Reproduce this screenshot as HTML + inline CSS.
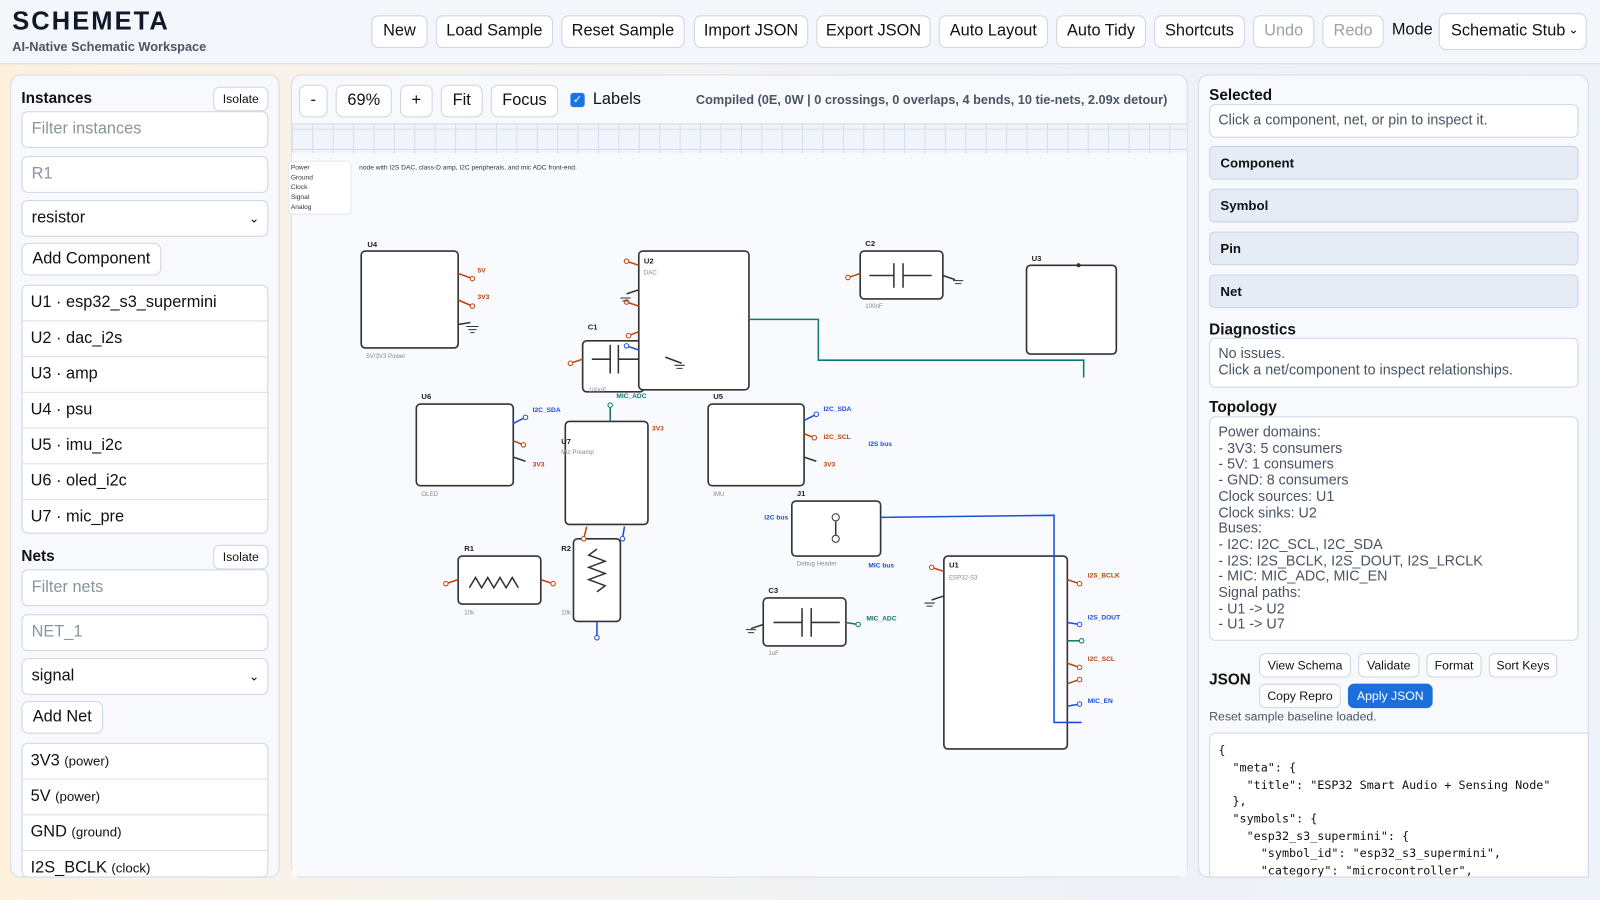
<!DOCTYPE html>
<html><head><meta charset="utf-8">
<style>
*{box-sizing:border-box;margin:0;padding:0}
html,body{width:1600px;height:900px;overflow:hidden}
body{font-family:"Liberation Sans",sans-serif;background:linear-gradient(90deg,#fdf1de 0%,#f5f3ef 30%,#eef2f8 70%,#eef3fa 100%);color:#111}
#w{position:absolute;left:0;top:0;width:1568px;height:882px;transform:scale(1.0204);transform-origin:0 0}
.a{position:absolute}
.hdr{left:0;top:0;width:1568px;height:63px;background:#f3f6fb;border-bottom:1px solid #cfd9e8}
.btn{position:absolute;background:#fff;border:1px solid #cdd6e2;border-radius:7px;font-size:16px;text-align:center;color:#111;line-height:30px;height:32px;white-space:nowrap}
.btn.dis{color:#9aa3ad}
.panel{position:absolute;background:#f7f9fc;border:1px solid #d4dce8;border-radius:10px}
.inp{position:absolute;background:#fff;border:1px solid #cdd6e2;border-radius:6px;font-size:16px;color:#8a94a0;padding-left:9px;line-height:34px;height:36px}
.list{position:absolute;background:#fff;border:1px solid #cdd6e2;border-radius:6px}
.li{height:35px;border-bottom:1px solid #d9e0ea;font-size:16px;line-height:34px;padding-left:8px}
.li small{font-size:13px}
.h{position:absolute;font-weight:bold;font-size:15px}
.sm{position:absolute;background:#fff;border:1px solid #cdd6e2;border-radius:6px;font-size:12px;text-align:center;line-height:22px;height:24px;white-space:nowrap}
.acc{position:absolute;left:1185px;width:362px;height:33px;background:#e6ecf5;border:1px solid #c9d3e2;border-radius:5px;font-weight:bold;font-size:13px;line-height:31px;padding-left:10px}
.box{position:absolute;background:#fff;border:1px solid #cdd6e2;border-radius:6px;font-size:14px;color:#4a5462;padding:7px 8px;line-height:15.7px}
</style></head><body><div id="w">
<div class="a hdr"></div>
<div class="a" style="left:12px;top:7px;font-size:25px;font-weight:bold;letter-spacing:2px;color:#111827">SCHEMETA</div>
<div class="a" style="left:12px;top:39px;font-size:12.5px;font-weight:bold;color:#4b5563">AI-Native Schematic Workspace</div>
<div class="btn" style="left:364px;top:15px;width:55px">New</div>
<div class="btn" style="left:427px;top:15px;width:115px">Load Sample</div>
<div class="btn" style="left:550px;top:15px;width:121px">Reset Sample</div>
<div class="btn" style="left:680px;top:15px;width:112px">Import JSON</div>
<div class="btn" style="left:800px;top:15px;width:112px">Export JSON</div>
<div class="btn" style="left:920px;top:15px;width:107px">Auto Layout</div>
<div class="btn" style="left:1035px;top:15px;width:88px">Auto Tidy</div>
<div class="btn" style="left:1131px;top:15px;width:89px">Shortcuts</div>
<div class="btn dis" style="left:1228px;top:15px;width:60px">Undo</div>
<div class="btn dis" style="left:1296px;top:15px;width:60px">Redo</div>
<div class="a" style="left:1364px;top:21px;font-size:16px">Mode</div>
<div class="btn" style="left:1410px;top:13px;width:145px;height:36px;line-height:34px;text-align:left;padding-left:11px">Schematic Stub <span style="position:absolute;right:7px;top:-2px;font-size:12px">&#8964;</span></div>

<!-- left panel -->
<div class="panel" style="left:10px;top:73px;width:264px;height:787px"></div>
<div class="h" style="left:21px;top:88px">Instances</div>
<div class="sm" style="left:209px;top:85px;width:54px">Isolate</div>
<div class="inp" style="left:21px;top:109px;width:242px">Filter instances</div>
<div class="inp" style="left:21px;top:153px;width:242px">R1</div>
<div class="inp" style="left:21px;top:196px;width:242px;color:#111">resistor<span style="position:absolute;right:8px;font-size:12px">&#8964;</span></div>
<div class="btn" style="left:21px;top:238px;width:137px">Add Component</div>
<div class="list" style="left:21px;top:279px;width:242px;height:244px">
<div class="li">U1 · esp32_s3_supermini</div><div class="li">U2 · dac_i2s</div><div class="li">U3 · amp</div><div class="li">U4 · psu</div><div class="li">U5 · imu_i2c</div><div class="li">U6 · oled_i2c</div><div class="li" style="border:0">U7 · mic_pre</div></div>
<div class="h" style="left:21px;top:537px">Nets</div>
<div class="sm" style="left:209px;top:534px;width:54px">Isolate</div>
<div class="inp" style="left:21px;top:558px;width:242px">Filter nets</div>
<div class="inp" style="left:21px;top:602px;width:242px">NET_1</div>
<div class="inp" style="left:21px;top:645px;width:242px;color:#111">signal<span style="position:absolute;right:8px;font-size:12px">&#8964;</span></div>
<div class="btn" style="left:21px;top:687px;width:80px">Add Net</div>
<div class="list" style="left:21px;top:728px;width:242px;height:132px;overflow:hidden">
<div class="li">3V3 <small>(power)</small></div><div class="li">5V <small>(power)</small></div><div class="li">GND <small>(ground)</small></div><div class="li">I2S_BCLK <small>(clock)</small></div></div>

<!-- center panel -->
<div class="panel" style="left:285px;top:73px;width:879px;height:787px"></div>
<div class="btn" style="left:293px;top:83px;width:28px">-</div>
<div class="btn" style="left:329px;top:83px;width:55px">69%</div>
<div class="btn" style="left:392px;top:83px;width:32px">+</div>
<div class="btn" style="left:432px;top:83px;width:41px">Fit</div>
<div class="btn" style="left:481px;top:83px;width:66px">Focus</div>
<div class="a" style="left:559px;top:91px;width:14px;height:14px;background:#1a73e8;border-radius:3px;color:#fff;font-size:11px;text-align:center;line-height:14px">✓</div>
<div class="a" style="left:581px;top:89px;font-size:16px">Labels</div>
<div class="a" style="left:682px;top:91px;font-size:12.5px;font-weight:bold;color:#4b5563">Compiled (0E, 0W | 0 crossings, 0 overlaps, 4 bends, 10 tie-nets, 2.09x detour)</div>
<div class="a" style="left:286px;top:121px;width:877px;height:738px;background:#f8fafd;border-top:1px solid #cfd9e8"></div>
<div class="a" style="left:286px;top:122px;width:877px;height:28px;background-color:#f1f5fb;background-image:linear-gradient(90deg,#d4deea 1px,transparent 1px),linear-gradient(0deg,#d4deea 1px,transparent 1px);background-size:20px 20px;background-position:0 0,0 5px"></div>

<svg class="a" style="left:0;top:0" width="1568" height="882" viewBox="0 0 1568 882" font-family="Liberation Sans,sans-serif">
<defs><marker id="c" markerWidth="6" markerHeight="6" refX="3" refY="3" markerUnits="userSpaceOnUse"><circle cx="3" cy="3" r="2.2" fill="#fff" stroke="context-stroke" stroke-width="1"/></marker></defs>
<rect x="283" y="158" width="61" height="52" rx="4" fill="#fff" stroke="#e3e8ef"/>
<g font-size="6.5" fill="#333"><text x="285" y="166">Power</text><text x="285" y="176">Ground</text><text x="285" y="185">Clock</text><text x="285" y="195">Signal</text><text x="285" y="205">Analog</text>
<text x="352" y="166">node with I2S DAC, class-D amp, I2C peripherals, and mic ADC front-end.</text></g>
<g fill="#fff" stroke="#333" stroke-width="1.6">
<rect x="354" y="246" width="95" height="95" rx="4"/>
<rect x="571" y="334" width="60" height="50" rx="4"/>
<rect x="626" y="246" width="108" height="136" rx="4"/>
<rect x="843" y="246" width="81" height="47" rx="4"/>
<rect x="1006" y="260" width="88" height="87" rx="4"/>
<rect x="408" y="396" width="95" height="80" rx="4"/>
<rect x="554" y="413" width="81" height="101" rx="4"/>
<rect x="694" y="396" width="94" height="80" rx="4"/>
<rect x="776" y="491" width="87" height="54" rx="4"/>
<rect x="449" y="545" width="81" height="47" rx="4"/>
<rect x="562" y="528" width="46" height="81" rx="4"/>
<rect x="748" y="586" width="81" height="47" rx="4"/>
<rect x="925" y="545" width="121" height="189" rx="4"/>
</g>
<g font-size="7.5" font-weight="bold" fill="#222"><text x="360" y="242">U4</text><text x="576" y="323">C1</text><text x="631" y="258">U2</text><text x="848" y="241">C2</text><text x="1011" y="256">U3</text><text x="413" y="391">U6</text><text x="550" y="435">U7</text><text x="699" y="391">U5</text><text x="781" y="486">J1</text><text x="455" y="540">R1</text><text x="550" y="540">R2</text><text x="753" y="581">C3</text><text x="930" y="556">U1</text></g>
<g font-size="6" fill="#888"><text x="359" y="351">5V/3V3 Power</text><text x="631" y="269">DAC</text><text x="577" y="384">100nF</text><text x="848" y="302">100nF</text><text x="413" y="486">OLED</text><text x="550" y="445">Mic Preamp</text><text x="699" y="486">IMU</text><text x="781" y="554">Debug Header</text><text x="455" y="602">10k</text><text x="550" y="602">10k</text><text x="753" y="642">1uF</text><text x="930" y="568">ESP32-S3</text></g>
<g font-size="6.5" font-weight="bold"><g fill="#c2410c"><text x="468" y="267">5V</text><text x="468" y="293">3V3</text><text x="639" y="422">3V3</text><text x="522" y="457">3V3</text><text x="807" y="457">3V3</text><text x="807" y="430">I2C_SCL</text><text x="1066" y="566">I2S_BCLK</text><text x="1066" y="648">I2C_SCL</text></g>
<g fill="#1d4ed8"><text x="522" y="404">I2C_SDA</text><text x="807" y="403">I2C_SDA</text><text x="851" y="437">I2S bus</text><text x="749" y="509">I2C bus</text><text x="851" y="556">MIC bus</text><text x="1066" y="607">I2S_DOUT</text><text x="1066" y="689">MIC_EN</text></g>
<g fill="#0f766e"><text x="604" y="390">MIC_ADC</text><text x="849" y="608">MIC_ADC</text></g></g>
<g fill="none" stroke-width="1.5">
<path d="M734 313 H802 V353 H1062 V370" stroke="#0f766e"/>
<path d="M863 507 L1033 505 V708 H1060" stroke="#1d4ed8"/>
<g stroke="#c2410c" marker-end="url(#c)"><path d="M449 268 l14 5"/><path d="M449 294 l14 6"/><path d="M626 260 l-12 -4"/><path d="M626 300 l-12 -4"/><path d="M626 325 l-10 4"/><path d="M571 352 l-12 4"/><path d="M843 268 l-12 4"/><path d="M503 432 l10 4"/><path d="M788 425 l10 4"/><path d="M449 568 l-12 4"/><path d="M530 568 l12 4"/><path d="M1046 568 l12 4"/><path d="M1046 650 l12 4"/><path d="M925 560 l-12 -4"/><path d="M1046 670 l12 -4"/><path d="M575 516 l-3 12"/></g>
<g stroke="#1d4ed8" marker-end="url(#c)"><path d="M626 343 l-12 -4"/><path d="M503 415 l12 -6"/><path d="M788 412 l12 -6"/><path d="M1046 610 l12 2"/><path d="M1046 692 l12 -2"/><path d="M585 609 v16"/><path d="M612 516 l-2 12"/></g>
<g stroke="#0f766e" marker-end="url(#c)"><path d="M598 413 v-16"/><path d="M829 610 l12 2"/><path d="M1046 628 h14"/></g>
<g stroke="#333"><path d="M449 318 l12 -2"/><path d="M626 284 l-12 4"/><path d="M924 270 l12 4"/><path d="M503 448 l12 4"/><path d="M788 448 l12 4"/><path d="M925 584 l-12 4"/><path d="M748 612 l-12 4"/><path d="M652 350 l16 6"/>
<path d="M457 320 h12 M459 323 h8 M461 326 h4 M934 275 h10 M936 278 h6 M906 591 h10 M908 594 h6 M731 617 h10 M733 620 h6 M661 358 h10 M663 361 h6 M608 292 h10 M610 295 h6" stroke-width="1"/>
<path d="M460 576 l6 -10 l6 10 l6 -10 l6 10 l6 -10 l6 10 l6 -10 l6 10"/>
<path d="M585 538 l-8 6 l16 6 l-16 6 l16 6 l-16 6 l16 6 l-8 6"/>
<path d="M580 352 h18 M598 338 v28 M606 338 v28 M606 352 h20"/>
<path d="M852 270 h24 M876 258 v24 M885 258 v24 M885 270 h28"/>
<path d="M758 610 h28 M786 596 v28 M795 596 v28 M795 610 h28"/>
<path d="M819 511 v16"/></g></g>
<g fill="#fff" stroke="#333"><circle cx="819" cy="507" r="3.5"/><circle cx="819" cy="528" r="3.5"/></g>
<circle cx="1057" cy="260" r="2" fill="#333"/>
</svg>

<!-- right panel -->
<div class="panel" style="left:1174px;top:73px;width:383px;height:787px"></div>
<div class="h" style="left:1185px;top:85px">Selected</div>
<div class="box" style="left:1185px;top:102px;width:362px;height:33px">Click a component, net, or pin to inspect it.</div>
<div class="acc" style="top:143px">Component</div>
<div class="acc" style="top:185px">Symbol</div>
<div class="acc" style="top:227px">Pin</div>
<div class="acc" style="top:269px">Net</div>
<div class="h" style="left:1185px;top:315px">Diagnostics</div>
<div class="box" style="left:1185px;top:331px;width:362px;height:49px">No issues.<br>Click a net/component to inspect relationships.</div>
<div class="h" style="left:1185px;top:391px">Topology</div>
<div class="box" style="left:1185px;top:408px;width:362px;height:220px">Power domains:<br>- 3V3: 5 consumers<br>- 5V: 1 consumers<br>- GND: 8 consumers<br>Clock sources: U1<br>Clock sinks: U2<br>Buses:<br>- I2C: I2C_SCL, I2C_SDA<br>- I2S: I2S_BCLK, I2S_DOUT, I2S_LRCLK<br>- MIC: MIC_ADC, MIC_EN<br>Signal paths:<br>- U1 -&gt; U2<br>- U1 -&gt; U7</div>
<div class="h" style="left:1185px;top:658px">JSON</div>
<div class="sm" style="left:1234px;top:640px;width:90px">View Schema</div>
<div class="sm" style="left:1331px;top:640px;width:60px">Validate</div>
<div class="sm" style="left:1398px;top:640px;width:54px">Format</div>
<div class="sm" style="left:1459px;top:640px;width:67px">Sort Keys</div>
<div class="sm" style="left:1234px;top:670px;width:80px">Copy Repro</div>
<div class="sm" style="left:1321px;top:670px;width:83px;background:#1a6fdc;border-color:#1a6fdc;color:#fff">Apply JSON</div>
<div class="a" style="left:1185px;top:695px;font-size:12px;color:#4b5563">Reset sample baseline loaded.</div>
<div class="box" style="left:1185px;top:718px;width:372px;height:142px;font-family:'DejaVu Sans Mono','Liberation Mono',monospace;font-size:11.5px;color:#111;line-height:16.8px;white-space:pre;padding:8px 8px;overflow:hidden;border-radius:6px 0 0 0">{
  "meta": {
    "title": "ESP32 Smart Audio + Sensing Node"
  },
  "symbols": {
    "esp32_s3_supermini": {
      "symbol_id": "esp32_s3_supermini",
      "category": "microcontroller",</div>
</div></body></html>
